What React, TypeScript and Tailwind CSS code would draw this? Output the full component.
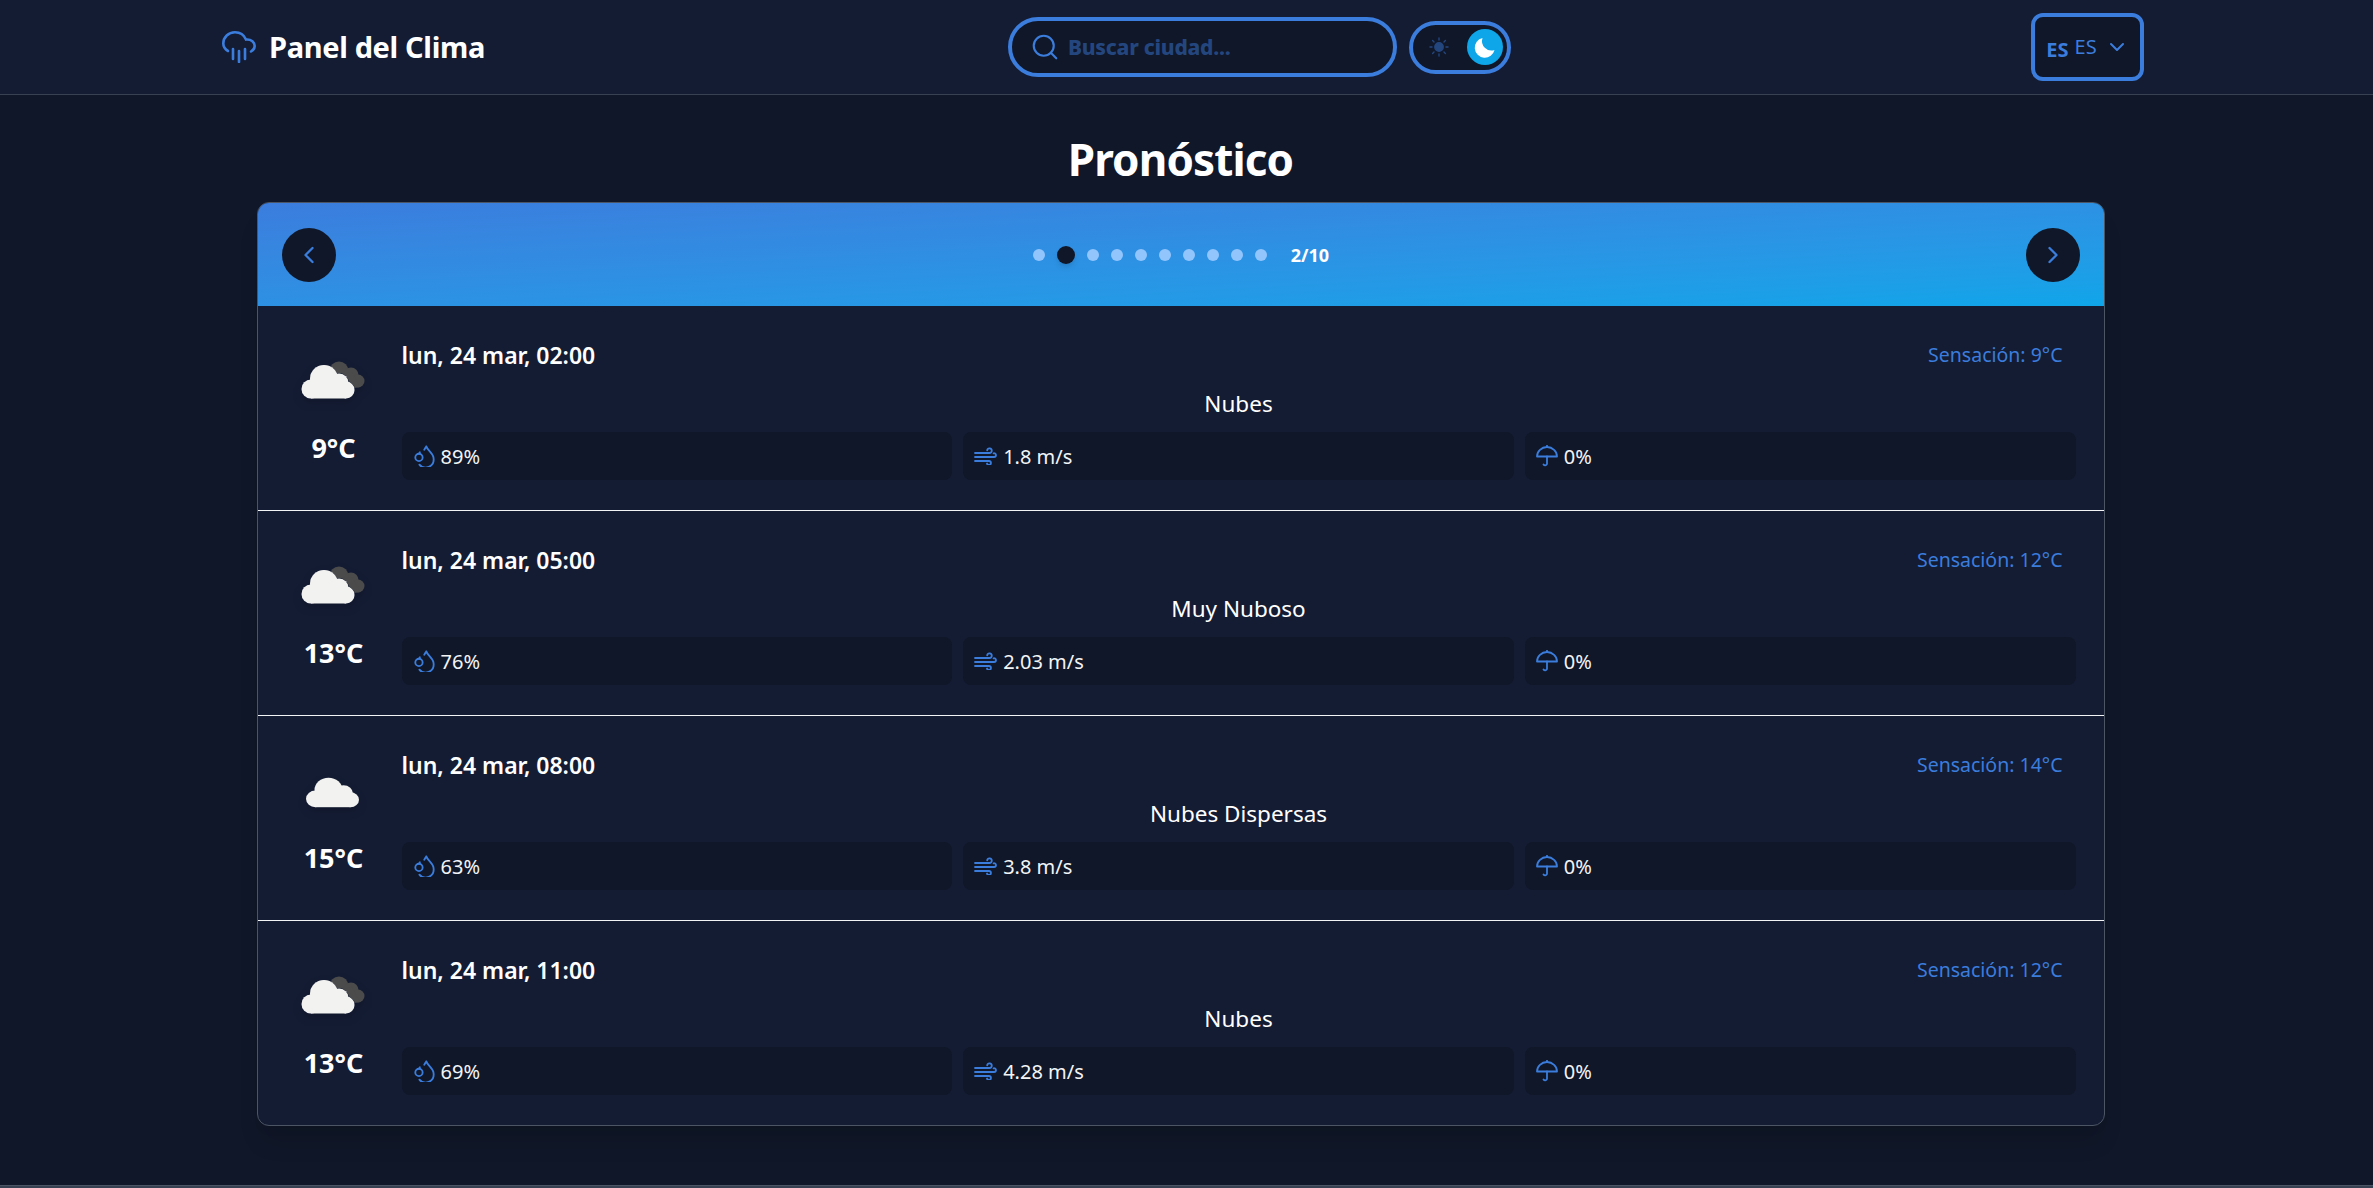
import { ChevronDown, ChevronLeft, ChevronRight, Search } from "lucide-react";

const font = { fontFamily: '"Noto Sans", "Open Sans", sans-serif' };

const rows = [
  { date: "lun, 24 mar, 02:00", feels: "9°C", desc: "Nubes", temp: "9°C", hum: "89%", wind: "1.8 m/s", rain: "0%", dark: true },
  { date: "lun, 24 mar, 05:00", feels: "12°C", desc: "Muy Nuboso", temp: "13°C", hum: "76%", wind: "2.03 m/s", rain: "0%", dark: true },
  { date: "lun, 24 mar, 08:00", feels: "14°C", desc: "Nubes Dispersas", temp: "15°C", hum: "63%", wind: "3.8 m/s", rain: "0%", dark: false },
  { date: "lun, 24 mar, 11:00", feels: "12°C", desc: "Nubes", temp: "13°C", hum: "69%", wind: "4.28 m/s", rain: "0%", dark: true },
];

function RainLogo() {
  return (
    <svg width="34" height="32" viewBox="0 0 34 32" fill="none" stroke="#3b7ddd" strokeWidth="2.6" strokeLinecap="round">
      <path d="M6 20C2.5 18 1.3 15.5 1.3 12.5C1.3 6 6.5 1.3 13 1.3C18 1.3 22 4 24 8.5C29.5 8 32.7 11.5 32.7 15C32.7 17 31.5 19 29 20.5" />
      <path d="M11 18V28M17 20V31M23 18V28" />
    </svg>
  );
}

function CloudIcon({ dark }: { dark: boolean }) {
  return (
    <svg width="80" height="64" viewBox="0 0 80 64" className="-ml-[3px] drop-shadow-[0_4px_4px_rgba(0,0,0,0.15)]">
      {dark ? (
        <g fill="#4b4b4b">
          <circle cx="47" cy="21" r="9.5" />
          <circle cx="59" cy="25" r="7.5" />
          <circle cx="66" cy="31" r="6.5" />
          <path d="M42 26L60 22L68 37L50 40Z" />
        </g>
      ) : null}
      {dark ? (
        <g fill="#f2f2f0" stroke="#141c34" strokeWidth="1">
          <circle cx="32" cy="29" r="14" />
          <circle cx="47" cy="33" r="9.5" />
          <circle cx="19" cy="39" r="9.5" />
          <circle cx="54" cy="40" r="8.5" />
        </g>
      ) : null}
      <g fill="#f2f2f0" transform={dark ? undefined : "translate(4.5 1) scale(1 0.88) translate(0 4)"}>
        <circle cx="32" cy="29" r="14" />
        <circle cx="47" cy="33" r="9.5" />
        <circle cx="19" cy="39" r="9.5" />
        <circle cx="54" cy="40" r="8.5" />
        <rect x="19" y="32" width="35" height="16.5" />
      </g>
    </svg>
  );
}

function DropsIcon() {
  return (
    <svg width="22" height="22" viewBox="0 0 24 24" fill="none" stroke="#3b7ddd" strokeWidth="2" strokeLinecap="round" strokeLinejoin="round">
      <circle cx="6.500" cy="13.500" r="4" />
      <path d="M6.500 9.500L7.500 8" />
      <path d="M14.500 1.500C13.800 2.700 13 4 12.300 5.200M14.500 1.500C16 6.500 22.500 9 22.500 15A8.800 8.800 0 0 1 7 21.500" />
    </svg>
  );
}

function WindIcon() {
  return (
    <svg width="23" height="18" viewBox="0 0 23 18" fill="none" stroke="#3b7ddd" strokeWidth="1.8" strokeLinecap="round">
      <path d="M1 6H15.500A2.300 2.300 0 1 0 13.200 3.400" />
      <path d="M1 10H20A2 2 0 0 0 22 8A2 2 0 0 0 19.500 6.300" />
      <path d="M1 14H15A2 2 0 1 1 13 16.500" />
    </svg>
  );
}

function UmbrellaIcon() {
  return (
    <svg width="22" height="22" viewBox="0 0 22 22" fill="none" stroke="#3b7ddd" strokeWidth="1.8" strokeLinecap="round" strokeLinejoin="round">
      <path d="M1 11.500A10 9.500 0 0 1 21 11.500Z" />
      <path d="M11 0.800V2" />
      <path d="M11 11.500V19A2 2 0 0 1 7.500 19.500" />
    </svg>
  );
}

function SunIcon() {
  return (
    <svg width="20" height="20" viewBox="0 0 20 20" fill="#24467f" stroke="#24467f" strokeWidth="1.400" strokeLinecap="round">
      <circle cx="10" cy="10" r="4.200" />
      <path d="M10 1V3M10 17V19M1 10H3M17 10H19M3.600 3.600L5 5M15 15L16.400 16.400M3.600 16.400L5 15M15 5L16.400 3.600" />
    </svg>
  );
}

function MoonIcon() {
  return (
    <svg width="24" height="24" viewBox="0 0 24 24" fill="#ffffff">
      <path d="M9.500 3A10 10 0 1 0 21.500 15A9.500 9.500 0 0 1 9.500 3Z" />
    </svg>
  );
}

function Stat({ icon, value }: { icon: React.ReactNode; value: string }) {
  return (
    <div className="flex h-[48px] items-center gap-[6px] rounded-lg bg-[#101728] px-[11px] text-[20px] text-[#f3f4f6]">
      {icon}
      <span className="mt-[2px]">{value}</span>
    </div>
  );
}

export default function App() {
  return (
    <div className="flex h-screen flex-col overflow-hidden bg-[#101728] text-white" style={font}>
      <header className="flex h-[95px] shrink-0 items-center justify-between border-b border-[#374151] bg-[#141c34] pl-[222px] pr-[229px]">
        <div className="flex items-center gap-[13px]">
          <RainLogo />
          <span className="text-[29px] font-bold tracking-[-0.012em]">Panel del Clima</span>
        </div>
        <div className="ml-[3px] flex items-center gap-[12px]">
          <div className="flex h-[60px] w-[389px] items-center gap-[8px] rounded-full border-4 border-[#3b7ddd] bg-[#101728] px-[18px]">
            <Search size={30} color="#3b7ddd" strokeWidth={1.700} />
            <span className="mt-[2px] text-[21px] font-extrabold tracking-[-0.012em] text-[#24467f]">Buscar ciudad...</span>
          </div>
          <div className="flex h-[53px] w-[102px] items-center justify-between rounded-full border-4 border-[#3b7ddd] bg-[#101728] pl-[16px] pr-[4px]">
            <SunIcon />
            <div className="flex h-[36px] w-[36px] items-center justify-center rounded-full bg-[#0ea5e9]">
              <MoonIcon />
            </div>
          </div>
        </div>
        <div className="flex h-[68px] w-[113px] items-center justify-center gap-[6px] rounded-xl border-4 border-[#3b7ddd] bg-[#101728] text-[#3b7ddd]">
          <span className="mt-[6px] text-[20px] font-bold leading-none">ES</span>
          <span className="text-[20px] leading-none">ES</span>
          <ChevronDown size={24} className="ml-[2px]" />
        </div>
      </header>

      <main className="flex-1 pr-[12px]">
        <div className="mx-auto flex w-[1848px] flex-col">
          <h1 className="flex h-[107px] items-center justify-center pt-[21px] text-[44px] font-bold tracking-[-0.02em]">
            Pronóstico
          </h1>
          <section className="overflow-hidden rounded-xl border border-[#4b5563] bg-[#141c34] shadow-xl">
            <div className="flex h-[103px] items-center justify-between bg-linear-to-br from-[#3b7ddd] to-[#0ea5e9] pl-[24px] pr-[23px]">
              <button className="flex h-[54px] w-[54px] items-center justify-center rounded-full bg-[#101728]">
                <ChevronLeft size={28} color="#3b7ddd" />
              </button>
              <div className="mt-[1px] flex items-center gap-[24px]">
                <div className="flex items-center gap-[12px]">
                  {Array.from({ length: 10 }).map((_, i) =>
                    i === 1 ? (
                      <span key={i} className="h-[18px] w-[18px] rounded-full bg-[#101728] shadow-md" />
                    ) : (
                      <span key={i} className="h-[12px] w-[12px] rounded-full bg-[#93c5fd]" />
                    ),
                  )}
                </div>
                <span className="text-[18px] font-bold">2/10</span>
              </div>
              <button className="flex h-[54px] w-[54px] items-center justify-center rounded-full bg-[#101728]">
                <ChevronRight size={28} color="#3b7ddd" />
              </button>
            </div>

            {rows.map((r, i) => (
              <div key={r.date} className={i < 3 ? "flex h-[205px] gap-[23px] border-b border-[#f3f4f6] pl-[29px] pr-[28px]" : "flex h-[204px] gap-[23px] pl-[29px] pr-[28px]"}>
                <div className="flex w-[92px] shrink-0 flex-col items-center pl-[2px] pt-[44px]">
                  <CloudIcon dark={r.dark} />
                  <span className="mt-[18px] text-[27px] font-bold leading-[32px]">{r.temp}</span>
                </div>
                <div className="flex flex-1 flex-col pt-[34px]">
                  <div className="flex h-[30px] items-center justify-between pr-[13px]">
                    <span className="text-[23px] font-semibold">{r.date}</span>
                    <span className="text-[19.500px] text-[#3b7ddd]">Sensación: {r.feels}</span>
                  </div>
                  <div className="mt-[19px] flex h-[30px] items-center justify-center text-[22.500px]">{r.desc}</div>
                  <div className="mt-[13px] grid grid-cols-3 gap-[11px]">
                    <Stat icon={<DropsIcon />} value={r.hum} />
                    <Stat icon={<WindIcon />} value={r.wind} />
                    <Stat icon={<UmbrellaIcon />} value={r.rain} />
                  </div>
                </div>
              </div>
            ))}
          </section>
        </div>
      </main>

      <footer className="h-[3px] shrink-0 border-t border-[#4b5563] bg-[#374151]" />
    </div>
  );
}
